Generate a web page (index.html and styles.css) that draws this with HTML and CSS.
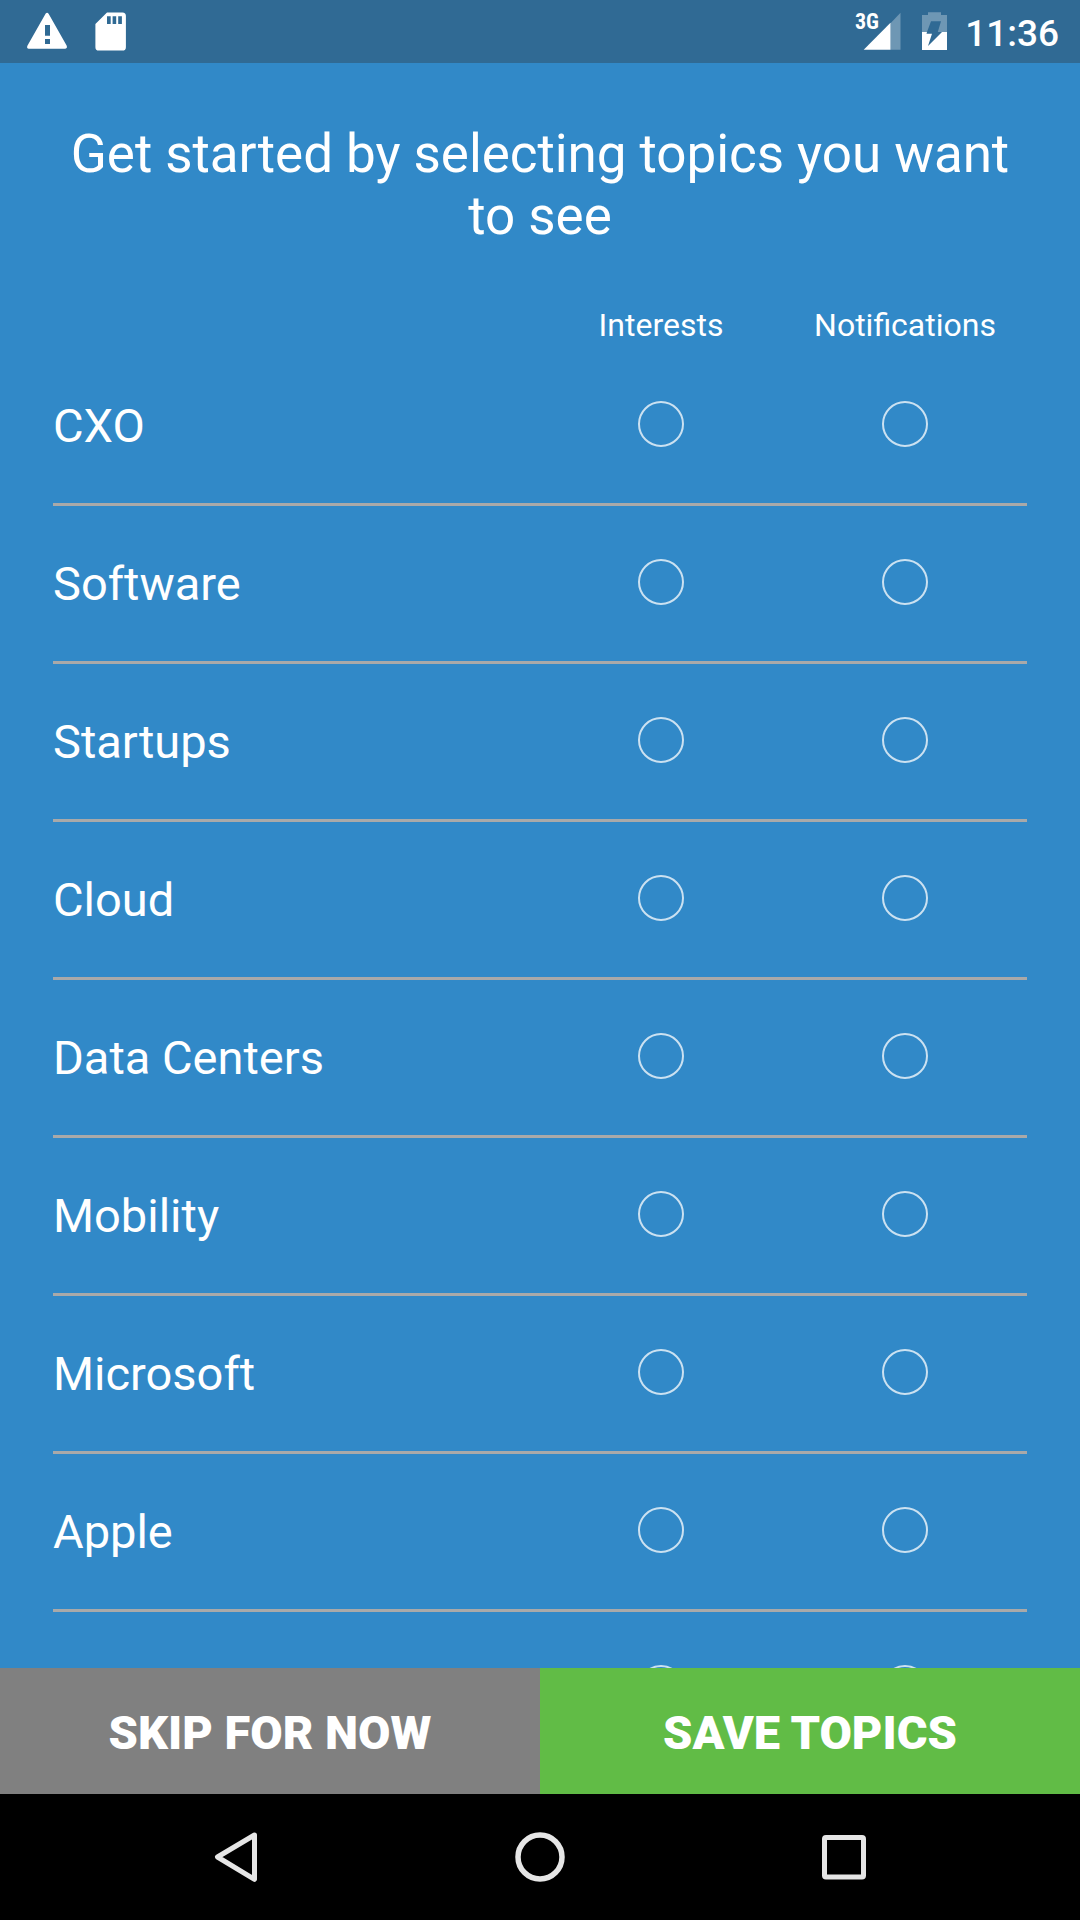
FILE: index.html
```
<!DOCTYPE html>
<html lang="en">
<head>
<meta charset="utf-8">
<title>Select topics</title>
<link rel="stylesheet" href="styles.css">
</head>
<body>
<div class="screen">
  <header class="status-bar">
    <svg class="status-left" width="140" height="63" viewBox="0 0 140 63" aria-hidden="true">
      <path fill="#fff" fill-rule="evenodd" d="M45.700 13.600Q47.200 12 48.600 13.800L66.600 45.600Q67.700 48.500 65.300 48.700H28.800Q26.300 48.500 27.400 45.800ZM45 25V35.700H50V25ZM45 39V44H50V39Z"/>
      <path fill="#fff" fill-rule="evenodd" d="M107 12.400H122.500Q125.900 12.600 125.900 15.800V47.200Q125.900 50.600 122.500 50.600H98.800Q95.400 50.600 95.400 47.200V24ZM107 16.300V24H110.700V16.300ZM112.600 16.300V24H116.200V16.300ZM118.200 16.300V24H121.900V16.300Z"/>
    </svg>
    <div class="status-right">
      <svg width="110" height="63" viewBox="850 0 110 63" aria-hidden="true">
        <text class="network" x="855" y="29">3G</text>
        <path fill="#fff" fill-opacity=".3" d="M890.500 23.300L900.500 12.800V49.700H890.500Z"/>
        <path fill="#fff" d="M890.500 22.800V49.700H863.700Z"/>
        <path fill="#fff" fill-opacity=".3" d="M922 32V15H928V12.300H941V15H947V32H937.800L941 21.200H931L927 32Z"/>
        <path fill="#fff" d="M922 32H927L926.500 33.700H932L928 46L942 32H947V49.900H922Z"/>
      </svg>
      <span class="clock">11:36</span>
    </div>
  </header>

  <main class="content">
    <h1 class="title">Get started by selecting topics you want to see</h1>
    <div class="columns">
      <span></span><span>Interests</span><span>Notifications</span>
    </div>
    <ul class="topics">
      <li class="topic"><span class="name">CXO</span><i class="radio"></i><i class="radio"></i></li>
      <li class="topic"><span class="name">Software</span><i class="radio"></i><i class="radio"></i></li>
      <li class="topic"><span class="name">Startups</span><i class="radio"></i><i class="radio"></i></li>
      <li class="topic"><span class="name">Cloud</span><i class="radio"></i><i class="radio"></i></li>
      <li class="topic"><span class="name">Data Centers</span><i class="radio"></i><i class="radio"></i></li>
      <li class="topic"><span class="name">Mobility</span><i class="radio"></i><i class="radio"></i></li>
      <li class="topic"><span class="name">Microsoft</span><i class="radio"></i><i class="radio"></i></li>
      <li class="topic"><span class="name">Apple</span><i class="radio"></i><i class="radio"></i></li>
      <li class="topic"><span class="name"></span><i class="radio"></i><i class="radio"></i></li>
    </ul>
  </main>

  <div class="actions">
    <button class="action skip">SKIP FOR NOW</button>
    <button class="action save">SAVE TOPICS</button>
  </div>

  <nav class="nav-bar">
    <svg width="1080" height="126" viewBox="0 0 1080 126" fill="none" stroke="#e6e6e6" aria-hidden="true">
      <path stroke-width="5" stroke-linejoin="round" d="M254.500 41L217.500 63L254.500 85.300Z"/>
      <circle cx="540" cy="63" r="22" stroke-width="5.500"/>
      <rect x="824.500" y="43.500" width="39" height="39.500" rx="1.500" stroke-width="5"/>
    </svg>
  </nav>
</div>
</body>
</html>
```
FILE: styles.css
```
* {
  box-sizing: border-box;
}

body {
  margin: 0;
  font-family: Roboto, sans-serif;
  color: #fff;
}

.screen {
  display: flex;
  flex-direction: column;
  width: 1080px;
  height: 1920px;
  overflow: hidden;
  background: #3189c8;
}

.status-bar {
  display: flex;
  flex: none;
  justify-content: space-between;
  height: 63px;
  background: #306a94;
}

.status-right {
  display: flex;
  padding-right: 21px;
}

.network {
  font: 700 22px "Roboto Condensed", Roboto, sans-serif;
  fill: #fff;
}

.clock {
  padding: 4px 0 0 5px;
  font-size: 37px;
  font-weight: 500;
  line-height: 60px;
}

.content {
  flex: 1;
  min-height: 0;
  overflow: hidden;
  padding: 60px 53px 0;
}

.title {
  margin: 0;
  font-size: 53px;
  font-weight: 400;
  letter-spacing: -.06px;
  line-height: 62px;
  text-align: center;
}

.columns,
.topic {
  display: grid;
  grid-template-columns: 486px 244px 244px;
}

.columns {
  margin-top: 59px;
  font-size: 32px;
  line-height: 38px;
  text-align: center;
}

.topics {
  margin: 4px 0 0;
  padding: 0;
  list-style: none;
}

.topic {
  align-items: center;
  height: 158px;
  border-bottom: 3px solid #a9a9a9;
}

.name {
  font-size: 47px;
  line-height: 155px;
}

.radio {
  justify-self: center;
  width: 46px;
  height: 46px;
  margin-bottom: 3px;
  border: 2px solid rgba(255, 255, 255, .75);
  border-radius: 50%;
}

.actions {
  display: grid;
  flex: none;
  grid-template-columns: 1fr 1fr;
  height: 126px;
}

.action {
  padding: 2px 0 0;
  border: 0;
  color: #fff;
  font: 900 47px Roboto, sans-serif;
}

.skip {
  background: #808080;
}

.save {
  background: #61bc46;
}

.nav-bar {
  flex: none;
  height: 126px;
  background: #000;
}
```
